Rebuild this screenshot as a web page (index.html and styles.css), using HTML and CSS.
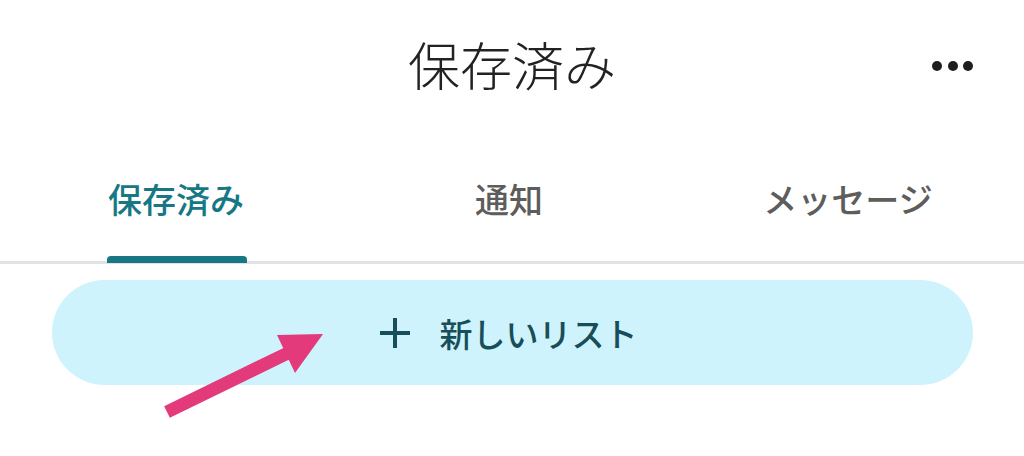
FILE: index.html
```html
<!DOCTYPE html>
<html lang="ja">
<head>
  <meta charset="UTF-8">
  <meta name="viewport" content="width=device-width, initial-scale=1.0">
  <title>保存済み</title>
  <link rel="stylesheet" href="styles.css">
</head>
<body>
  <div class="page">
    <header class="header">
      <div></div>
      <h1>保存済み</h1>
      <div class="more" aria-label="その他">
        <span></span><span></span><span></span>
      </div>
    </header>

    <nav class="tabs">
      <div class="tab active">
        <div class="tab-label">
          <span>保存済み</span>
          <div class="indicator"></div>
        </div>
      </div>
      <div class="tab middle">
        <div class="tab-label"><span>通知</span></div>
      </div>
      <div class="tab">
        <div class="tab-label"><span>メッセージ</span></div>
      </div>
    </nav>

    <button type="button" class="new-list">
      <span class="plus"></span>
      <span>新しいリスト</span>
    </button>

    <!-- 注釈の矢印 -->
    <svg class="arrow" width="190" height="110" viewBox="0 0 190 110">
      <line x1="17" y1="92" x2="140" y2="32" stroke="#e33a7b" stroke-width="13"/>
      <polygon points="173,14 127,15 145,53" fill="#e33a7b"/>
    </svg>
  </div>
</body>
</html>
```

FILE: styles.css
```css
body {
  margin: 0;
  background: #fff;
  font-family: "Noto Sans CJK JP", "Noto Sans", sans-serif;
}
.page {
  position: relative;
  width: 1024px;
  height: 456px;
  overflow: hidden;
}
.header {
  height: 128px;
  display: grid;
  grid-template-columns: 1fr auto 1fr;
  align-items: center;
}
.header h1 {
  margin: 0;
  font-size: 52px;
  font-weight: 300;
  line-height: 1;
  color: #222;
}
.more {
  justify-self: end;
  display: flex;
  gap: 5.5px;
  margin-right: 51px;
  margin-top: 4px;
}
.more span {
  width: 10px;
  height: 10px;
  border-radius: 50%;
  background: #1e1e1e;
}
.tabs {
  display: grid;
  grid-template-columns: repeat(3, 336px);
  padding: 0 8px;
  height: 136px;
  box-shadow: inset 0 -3px 0 #e3e3e3;
}
.tab {
  display: flex;
  justify-content: center;
  padding-top: 47px;
}
.tab.middle {
  padding-right: 6px;
}
.tab-label {
  display: flex;
  flex-direction: column;
  align-items: stretch;
  gap: 33px;
  font-size: 34px;
  line-height: 48px;
  font-weight: 500;
  color: #5d5d5d;
}
.tab.active .tab-label {
  color: #177784;
}
.indicator {
  height: 7px;
  margin-left: -1px;
  margin-right: -3px;
  border-radius: 4px 4px 0 0;
  background: #177784;
}
.new-list {
  display: flex;
  align-items: center;
  justify-content: center;
  gap: 30px;
  width: 921px;
  height: 105px;
  margin: 16px 0 0 52px;
  padding: 0 8px 0 0;
  border: none;
  border-radius: 53px;
  background: #cff3fc;
  color: #174e59;
  font-family: inherit;
  font-size: 33px;
  font-weight: 500;
}
.plus {
  position: relative;
  width: 30px;
  height: 30px;
}
.plus::before,
.plus::after {
  content: "";
  position: absolute;
  background: #174e59;
}
.plus::before {
  left: 0;
  right: 0;
  top: 13px;
  height: 4px;
}
.plus::after {
  top: 0;
  bottom: 0;
  left: 13px;
  width: 4px;
}
.arrow {
  position: absolute;
  left: 150px;
  top: 320px;
}
```
